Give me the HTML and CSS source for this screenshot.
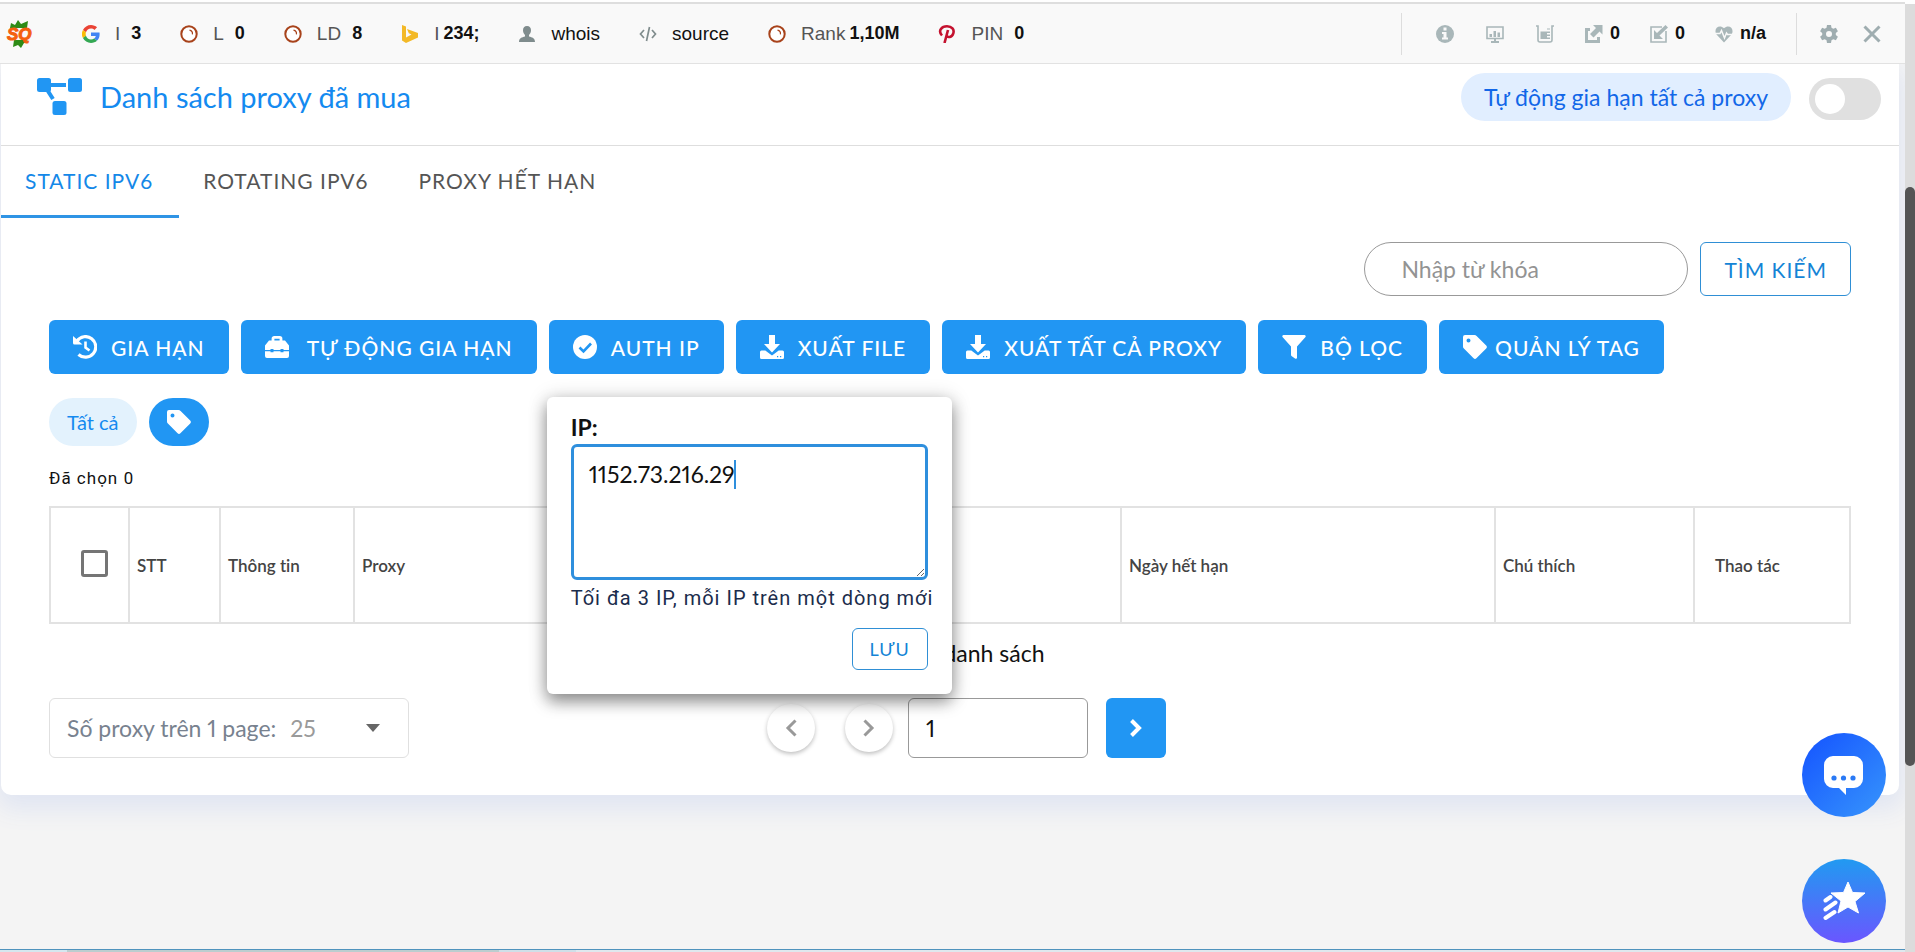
FILE: index.html
```html
<!DOCTYPE html>
<html lang="vi">
<head>
<meta charset="utf-8">
<title>Danh sách proxy đã mua</title>
<link rel="stylesheet" href="styles.css">
</head>
<body>
<svg class="defs" aria-hidden="true">
  <symbol id="ring" viewBox="0 0 18 18"><circle cx="9" cy="9" r="7.7" fill="#fff" stroke="#a8431b" stroke-width="2"/><path d="M9.5 5.2A3.7 3.7 0 0 1 12.4 9.4" fill="none" stroke="#a8431b" stroke-width="1.2"/></symbol>
  <symbol id="tag" viewBox="0 0 24 24"><path fill="currentColor" fill-rule="evenodd" d="M2 0h9.5a3 3 0 0 1 2.1.9l9.6 9.7a2 2 0 0 1 0 2.8l-9.8 9.8a2 2 0 0 1-2.8 0L.9 13.600A3 3 0 0 1 0 11.500V2a2 2 0 0 1 2-2zM5.500 3.500a2 2 0 1 0 0 4 2 2 0 0 0 0-4z"/></symbol>
  <symbol id="download" viewBox="0 0 24 24"><path fill="currentColor" fill-rule="evenodd" d="M9 0h6v9h5l-8 8.500L4 9h5zM1.500 15.500h3.800l6.700 5 6.700-5h3.800A1.500 1.500 0 0 1 24 17v5.500a1.500 1.500 0 0 1-1.500 1.500h-21A1.500 1.500 0 0 1 0 22.500V17a1.500 1.500 0 0 1 1.500-1.500zM17 21v1.200h1.200V21zm3 0v1.200h1.200V21z"/></symbol>
</svg>
<div class="window">
  <header class="toolbar">
    <svg class="logo" viewBox="0 0 26 28" role="img" aria-label="SQ"><path fill="#2e8b17" d="M3 8l1-5 4 2 3-5 3 4 7-3-1 7zM7 20h14l-4 3-3 5-3-3-5 2z"/><text x="0" y="20" fill="#f4600f" stroke="#f4600f" stroke-width="1">SQ</text></svg>
    <nav class="metrics">
      <a class="metric" href="#"><svg viewBox="0 0 48 48"><path fill="#ea4335" d="M24 9.500c3.500 0 6.700 1.200 9.200 3.600l6.900-6.900C35.900 2.400 30.500 0 24 0 14.600 0 6.500 5.400 2.600 13.200l8 6.200C12.400 13.700 17.700 9.500 24 9.500z"/><path fill="#4285f4" d="M47 24.500c0-1.600-.2-3.100-.4-4.500H24v9h12.900c-.6 3-2.300 5.500-4.800 7.200l7.700 6C44.400 38 47 31.800 47 24.500z"/><path fill="#fbbc05" d="M10.500 28.600a14.500 14.500 0 0 1 0-9.200l-8-6.200a24 24 0 0 0 0 21.600z"/><path fill="#34a853" d="M24 48c6.500 0 11.900-2.100 15.900-5.800l-7.700-6c-2.200 1.500-4.900 2.300-8.200 2.300-6.300 0-11.600-4.200-13.500-9.900l-8 6.200C6.500 42.600 14.600 48 24 48z"/></svg><span>I</span><b>3</b></a>
      <a class="metric" href="#"><svg><use href="#ring"/></svg><span>L</span><b>0</b></a>
      <a class="metric" href="#"><svg><use href="#ring"/></svg><span>LD</span><b>8</b></a>
      <a class="metric" href="#"><svg viewBox="0 0 18 18"><path fill="#f3b927" d="M1 0l4 1.500v11l5.500-3-2.700-1.300L6 4l11 4v4.600L5 18l-4-2.500z"/></svg><span>I</span><b>234;</b></a>
      <a class="metric plain" href="#"><svg viewBox="0 0 18 18"><path fill="#7f8c8d" d="M9 1c2.700 0 4 1.800 4 4.300 0 2-.9 3.800-2 4.700v1.500c3 .8 6 1.500 6 5.500H1c0-4 3-4.700 6-5.500V10C5.900 9.100 5 7.300 5 5.300 5 2.800 6.300 1 9 1z"/></svg><span>whois</span></a>
      <a class="metric plain" href="#"><svg viewBox="0 0 18 18"><path fill="none" stroke="#7f8c8d" stroke-width="1.700" d="M5 5L1.500 9 5 13M13 5l3.500 4-3.500 4M10.500 2l-3 14"/></svg><span>source</span></a>
      <a class="metric" href="#"><svg><use href="#ring"/></svg><span>Rank</span><b>1,10M</b></a>
      <a class="metric" href="#"><svg viewBox="0 0 18 18"><path fill="none" stroke="#c4122f" stroke-width="2.600" d="M4 10.500C-.5 5.500 4 1.300 9 1.300c5 0 7.500 3.200 6.300 7C14 12.500 9.500 13 8.300 10.500M10 5L6.500 18"/></svg><span>PIN</span><b>0</b></a>
    </nav>
    <nav class="tools">
      <button aria-label="Info"><svg viewBox="0 0 18 18"><circle cx="9" cy="9" r="9" fill="#a9b7b9"/><path fill="#f9f9f9" d="M7.500 2.500h3v3h-3zM6 7h4.500v5.500H12v2H6v-2h1.500V9H6z"/></svg></button>
      <button aria-label="Diagnosis"><svg viewBox="0 0 18 18"><path fill="none" stroke="#a9b7b9" stroke-width="1.600" d="M1 2h16v11.500H1z"/><path fill="#a9b7b9" d="M3.500 9h2.500v3H3.500zM7.500 6H10v6H7.500zM11.500 7.500H14V12h-2.500zM8 14h2v2h3v2H5v-2h3z"/></svg></button>
      <button aria-label="Density"><svg viewBox="0 0 18 18"><path fill="none" stroke="#a9b7b9" stroke-width="1.600" d="M0 1h2v14a2 2 0 0 0 2 2h10a2 2 0 0 0 2-2V1h2"/><path fill="#a9b7b9" d="M4.500 6.500H14V8h-3v1.500h3V11h-3v1.500h3V14H4.500zM11 3.500h3v1h-3z"/></svg></button>
      <button class="count"><svg viewBox="0 0 18 18"><path fill="#a9b7b9" d="M8 0h9.500v9.500l-3-3-6 6-3.500-3.500 6-6zM0 3h5v3H3v9h9v-3h3v6H0z"/></svg>0</button>
      <button class="count"><svg viewBox="0 0 18 18"><path fill="none" stroke="#a9b7b9" stroke-width="1.600" d="M12 2H1v15h15V6"/><path fill="#a9b7b9" d="M4 5l3 3 8.500-8L18 2.500 9.500 10.500 13 14H4z"/></svg>0</button>
      <button class="count"><svg viewBox="0 0 18 18"><path fill="#a9b7b9" d="M9 17.500L1.500 9.500C-2 4 4-1.500 9 3.300 14-1.500 20 4 16.500 9.500z"/><path fill="none" stroke="#f9f9f9" stroke-width="1.500" d="M0 8.500h5L6.500 5.500l3 7.500 2-5 1 1.500H18"/></svg>n/a</button>
      <div class="window-tools">
        <button aria-label="Settings"><svg viewBox="0 0 18 18"><path fill="#9fadb0" fill-rule="evenodd" d="M7 0h4l.5 2.700 1.800 1 2.600-.9 2 3.400-2.100 1.800v2l2.100 1.800-2 3.400-2.600-.9-1.800 1L11 18H7l-.5-2.700-1.800-1-2.600.9-2-3.400L2.200 10V8L.1 6.200l2-3.400 2.600.9 1.800-1zM9 6a3 3 0 1 0 0 6 3 3 0 0 0 0-6z"/></svg></button>
        <button aria-label="Close"><svg viewBox="0 0 18 18"><path fill="none" stroke="#9fadb0" stroke-width="3" d="M1.500 1.500l15 15M16.500 1.500l-15 15"/></svg></button>
      </div>
    </nav>
  </header>

  <main class="card">
    <div class="card-head">
      <svg class="title-icon" viewBox="0 0 45 37"><path fill="none" stroke="#2196f3" stroke-width="4" d="M10 7h19M9 10l7 11"/><g fill="#2196f3"><rect width="14" height="14" rx="2.500"/><rect x="31" width="14" height="14" rx="2.500"/><rect x="15.500" y="23" width="14" height="14" rx="2.500"/></g></svg>
      <h1>Danh sách proxy đã mua</h1>
      <label class="pill" for="auto">Tự động gia hạn tất cả proxy</label>
      <input id="auto" class="switch" type="checkbox" role="switch">
    </div>
    <div class="tabs" role="tablist">
      <button class="tab active" role="tab" aria-selected="true">STATIC IPV6</button>
      <button class="tab" role="tab">ROTATING IPV6</button>
      <button class="tab" role="tab">PROXY HẾT HẠN</button>
    </div>
    <div class="card-body">
      <form class="search">
        <input type="text" placeholder="Nhập từ khóa" aria-label="Nhập từ khóa">
        <button type="button" class="outline">TÌM KIẾM</button>
      </form>
      <div class="actions">
        <button class="action"><svg viewBox="0 0 24 24"><path fill="none" stroke="currentColor" stroke-width="3.200" d="M4 6a10.300 10.300 0 1 1 1.500 13.500"/><path fill="currentColor" d="M0 1l9.500 8.500H1.500A1.500 1.500 0 0 1 0 8z"/><path fill="none" stroke="currentColor" stroke-width="2.600" d="M12.500 6.500v6l4 3"/></svg>GIA HẠN</button>
        <button class="action wide"><svg viewBox="0 0 24 24"><path fill="none" stroke="currentColor" stroke-width="2.800" d="M8 6V3.500A1.200 1.200 0 0 1 9.200 2.300h5.600A1.200 1.200 0 0 1 16 3.500V6"/><path fill="currentColor" d="M4 5.500h16l4 5V15h-5.500v-1h-3v1h-7v-1h-3v1H0v-4.500zM0 16.300h5.500v1h3v-1h7v1h3v-1H24V21a2 2 0 0 1-2 2H2a2 2 0 0 1-2-2z"/></svg>TỰ ĐỘNG GIA HẠN</button>
        <div class="anchor">
          <button class="action" aria-expanded="true"><svg viewBox="0 0 24 24"><circle cx="12" cy="12" r="12" fill="currentColor"/><path fill="none" stroke="#2196f3" stroke-width="2.600" d="M6.500 12.500l4 4 7.500-8"/></svg>AUTH IP</button>
          <section class="popup">
            <label for="ips">IP:</label>
            <div class="field"><textarea id="ips" spellcheck="false">1152.73.216.29</textarea><span class="caret" aria-hidden="true"></span></div>
            <p>Tối đa 3 IP, mỗi IP trên một dòng mới</p>
            <button class="outline small">LƯU</button>
          </section>
        </div>
        <button class="action"><svg><use href="#download"/></svg>XUẤT FILE</button>
        <button class="action"><svg><use href="#download"/></svg>XUẤT TẤT CẢ PROXY</button>
        <button class="action"><svg viewBox="0 0 24 24"><path fill="currentColor" d="M1.500 0h21a1.300 1.300 0 0 1 1 2L15 11.500v11a1.200 1.200 0 0 1-2 1L9.500 21a1.500 1.500 0 0 1-.5-1v-8.500L.5 2a1.300 1.300 0 0 1 1-2z"/></svg>BỘ LỌC</button>
        <button class="action snug"><svg><use href="#tag"/></svg>QUẢN LÝ TAG</button>
      </div>
      <div class="chips">
        <button class="chip">Tất cả</button>
        <button class="chip solid" aria-label="Tag"><svg><use href="#tag"/></svg></button>
      </div>
      <p class="selected">Đã chọn 0</p>
      <table>
        <colgroup><col class="c1"><col class="c2"><col class="c3"><col class="c4"><col class="c5"><col class="c6"><col class="c7"></colgroup>
        <thead><tr><th class="pick"><input type="checkbox" aria-label="Chọn tất cả"></th><th>STT</th><th>Thông tin</th><th>Proxy</th><th>Ngày hết hạn</th><th>Chú thích</th><th class="ops">Thao tác</th></tr></thead>
      </table>
      <p class="empty">danh sách</p>
      <div class="pager">
        <div class="size"><label for="size">Số proxy trên 1 page:</label><select id="size"><option>25</option></select><svg viewBox="0 0 14 8"><path fill="#666" d="M0 0h14L7 8z"/></svg></div>
        <div class="pages">
          <button class="round" aria-label="Trang trước"><svg viewBox="0 0 12 18"><path d="M10.500 1.500L3 9l7.500 7.500"/></svg></button>
          <button class="round" aria-label="Trang sau"><svg viewBox="0 0 12 18"><path d="M1.500 1.500L9 9l-7.500 7.500"/></svg></button>
          <input type="text" value="1" aria-label="Trang">
          <button class="go" aria-label="Đi tới trang"><svg viewBox="0 0 12 18"><path d="M1.500 1.500L9 9l-7.500 7.500"/></svg></button>
        </div>
      </div>
    </div>
  </main>
  <footer class="taskbar"><i class="t1"></i><i class="t2"></i><i class="t3"></i></footer>
</div>
<div class="scrollbar"><div class="thumb"></div></div>
<div class="fabs">
  <button class="fab chat" aria-label="Chat"><svg viewBox="0 0 40 40"><path fill="#fff" d="M9 1h21a9 9 0 0 1 9 9v14a9 9 0 0 1-9 9h-8v7l-7-7H9a9 9 0 0 1-9-9V10a9 9 0 0 1 9-9z"/><g fill="#2979f5"><circle cx="10" cy="23" r="2.600"/><circle cx="19.500" cy="23" r="2.600"/><circle cx="29" cy="23" r="2.600"/></g></svg></button>
  <button class="fab star" aria-label="Nổi bật"><svg viewBox="0 0 42 40"><path fill="#fff" stroke="#fff" stroke-linejoin="round" d="M25 1l4.500 10.500L42 12l-10 8.500L35.500 32 25 26l-10 6 3-12L8 12l12.500-.5z"/><path stroke="#fff" stroke-width="4" stroke-linecap="round" d="M2.500 19.500l5-3.500M2.500 28.500l10-7M2.500 37l9-6"/></svg></button>
</div>
</body>
</html>
```

FILE: styles.css
```css
* { box-sizing: border-box; }
body {
  margin: 0;
  min-height: 100vh;
  display: flex;
  background: #f4f4f4;
  color: #111;
  font-family: Lato, "Open Sans", sans-serif;
  font-size: 23px;
  font-variant-numeric: proportional-nums;
  font-variant-ligatures: none;
}
button, input, select, textarea { font: inherit; font-variant-numeric: inherit; color: inherit; }
button { border: 0; padding: 0; background: none; cursor: pointer; }
p, h1 { margin: 0; }
.defs { position: absolute; width: 0; height: 0; }
.window { flex: 1; min-width: 0; display: flex; flex-direction: column; overflow: hidden; }

/* SEO toolbar */
.toolbar {
  display: flex;
  align-items: center;
  height: 64px;
  flex: none;
  padding: 4px 23px 0 7px;
  border-bottom: 1px solid #e2e2e2;
  background: linear-gradient(#fff 2px, #dedede 2px, #dedede 4px, #f9f9f9 4px);
  font-family: "Liberation Sans", Arial, sans-serif;
  font-size: 19px;
  position: relative;
  z-index: 1;
}
.logo { width: 26px; height: 28px; margin-right: 49px; overflow: visible; font-size: 17px; font-weight: 700; font-style: italic; }
.metrics { display: flex; gap: 39px; }
.metric { display: flex; align-items: center; color: #555; text-decoration: none; }
.metric svg { width: 18px; height: 18px; margin-right: 15px; }
.metric b { min-width: 21px; padding-left: 4px; text-align: right; color: #111; font-size: 18px; }
.plain { color: #111; }
.tools { display: flex; align-items: center; margin-left: auto; height: 42px; padding-left: 33px; border-left: 1px solid #ddd; gap: 30px; }
.tools button { display: flex; align-items: center; padding: 0 1px; }
.tools svg { width: 18px; height: 18px; }
.tools .count { gap: 7px; padding: 0; font-size: 18px; font-weight: 700; }
.window-tools { display: flex; align-items: center; gap: 23px; height: 42px; padding-left: 22px; border-left: 1px solid #ddd; }

/* Card */
.card {
  margin: 0 6px 0 1px;
  background: #fff;
  border-radius: 0 0 10px 10px;
  box-shadow: 0 10px 25px 4px #e0e5f2;
}
.card-head {
  display: flex;
  align-items: center;
  height: 82px;
  padding: 0 18px 16px 36px;
  border-bottom: 1px solid #dedede;
}
.title-icon { width: 45px; height: 37px; }
h1 { margin-left: 18px; color: #148af0; font-size: 29px; font-weight: 400; }
.pill {
  margin-left: auto;
  padding: 0 23px;
  border-radius: 24px;
  background: #e1eeff;
  color: #1267e8;
  font-size: 23px;
  line-height: 48px;
}
.switch {
  appearance: none;
  width: 72px;
  height: 42px;
  margin: 4px 0 0 18px;
  padding: 6px;
  border-radius: 21px;
  background: #e0e0e0;
}
.switch::before { content: ""; display: block; width: 30px; height: 30px; border-radius: 50%; background: #fff; }
.tabs { display: flex; height: 72px; }
.tab { padding: 0 26px 0 24px; border-bottom: 3px solid transparent; color: #555; font-size: 21px; letter-spacing: 1px; }
.tab.active { color: #1488e8; border-color: #2f94e5; }
.card-body { padding: 24px 48px 37px; }

.search { display: flex; justify-content: flex-end; gap: 12px; }
.search input { width: 324px; height: 54px; padding: 0 36px; border: 1px solid #999; border-radius: 27px; outline: 0; }
.search input::placeholder { color: #939393; }
.outline { height: 54px; padding: 0 23px; border: 1px solid #2f8fd5; border-radius: 6px; background: #fff; color: #1484d6; font-size: 21px; letter-spacing: 1px; }

.actions { display: flex; gap: 12px; margin-top: 24px; }
.action {
  display: flex;
  align-items: center;
  gap: 14px;
  height: 54px;
  padding: 0 24px;
  border-radius: 6px;
  background: #2196f3;
  color: #fff;
  font-size: 21px;
  font-weight: 500;
  letter-spacing: 1px;
  white-space: nowrap;
}
.action svg { width: 24px; height: 24px; flex: none; }
.action.wide { gap: 18px; }
.action.snug { gap: 8px; }
.anchor { position: relative; }

.popup {
  position: absolute;
  z-index: 2;
  top: 77px;
  left: -2px;
  width: 405px;
  height: 297px;
  padding: 14px 24px 24px;
  border-radius: 6px;
  background: #fff;
  box-shadow: 0 8px 16px rgba(0, 0, 0, .38), 0 1px 20px rgba(0, 0, 0, .18);
  display: flex;
  flex-direction: column;
}
.popup label { font-weight: 700; font-size: 23px; line-height: 33px; }
.field { position: relative; display: flex; }
.field textarea { width: 100%; height: 136px; padding: 12px 15px; border: 3px solid #2f8fdd; border-radius: 6px; outline: 0; line-height: 30px; }
.caret { position: absolute; top: 16px; left: 163px; width: 2px; height: 29px; background: #2f8fdd; }
.popup p { margin-top: 3px; color: #1b2c4c; font-family: Roboto, sans-serif; font-size: 20px; line-height: 30px; letter-spacing: 1px; white-space: nowrap; }
.small { align-self: flex-end; height: 42px; margin-top: 15px; padding: 0 17px; font-size: 18px; }

.chips { display: flex; gap: 12px; margin-top: 24px; }
.chip { height: 48px; padding: 0 18px; border-radius: 24px; background: #e3f2fd; color: #148af0; font-size: 20px; }
.chip svg { display: block; width: 24px; height: 24px; }
.solid { background: #2196f3; color: #fff; }
.selected { margin-top: 20px; font-family: Roboto, sans-serif; font-size: 17px; line-height: 24px; letter-spacing: 1px; }

table { width: 100%; margin-top: 16px; border-collapse: collapse; table-layout: fixed; }
th { height: 116px; padding: 0 7px; border: 2px solid #e2e2e2; color: #444; font-size: 17px; font-weight: 600; text-align: left; }
.c1 { width: 79px; } .c2 { width: 91px; } .c3 { width: 134px; } .c5 { width: 374px; } .c6 { width: 199px; } .c7 { width: 156px; }
.ops { padding-left: 20px; }
.pick { padding: 0 20px 3px 30px; }
.pick input { appearance: none; display: block; width: 27px; height: 27px; margin: 0; border: 3px solid #757575; border-radius: 3px; }
.empty { margin-top: 14px; padding-left: 88px; line-height: 30px; text-align: center; }

.pager { display: grid; grid-template-columns: 360px 1fr; align-items: center; margin-top: 30px; }
.size { display: flex; align-items: center; height: 60px; padding: 0 28px 0 17px; border: 1px solid #e0e0e0; border-radius: 6px; color: #78828f; }
.size select { appearance: none; flex: 1; margin-left: 14px; border: 0; background: none; color: #9a9a9a; }
.size svg { width: 14px; height: 8px; }
.pages { display: flex; align-items: center; padding-left: 358px; }
.round { width: 48px; height: 48px; margin-right: 30px; border-radius: 50%; background: #fff; box-shadow: 0 2px 4px rgba(0, 0, 0, .25); }
.round + .round { margin-right: 15px; }
.pages svg { width: 12px; height: 18px; fill: none; stroke: #999; stroke-width: 3; }
.pages input { width: 180px; height: 60px; padding: 0 17px; border: 1px solid #999; border-radius: 6px; }
.go { width: 60px; height: 60px; margin-left: 18px; border-radius: 6px; background: #2196f3; }
.pages .go svg { stroke: #fff; stroke-width: 4; }

.taskbar { display: flex; height: 3px; margin-top: auto; border-top: 1px solid #4f93bd; background: #dfe8ee; }
.taskbar i { height: 2px; }
.t1 { width: 67px; background: #d5e7ef; }
.t2 { width: 432px; background: #bccdcf; }
.t3 { width: 77px; background: #cfdfe8; }

.scrollbar { width: 10px; padding-top: 187px; background: linear-gradient(#fff 4px, #dcdcdc 4px); }
.thumb { height: 579px; border-radius: 5px; background: #555; }

.fabs { position: fixed; right: 29px; bottom: 9px; display: flex; flex-direction: column; gap: 42px; z-index: 3; }
.fab { width: 84px; height: 84px; border-radius: 50%; display: flex; align-items: center; justify-content: center; }
.fab svg { width: 40px; height: 40px; }
.chat { background: linear-gradient(135deg, #1453ff, #3795fc); }
.star { background: linear-gradient(#219af1, #6a56ff); }
.star svg { width: 42px; }
```
